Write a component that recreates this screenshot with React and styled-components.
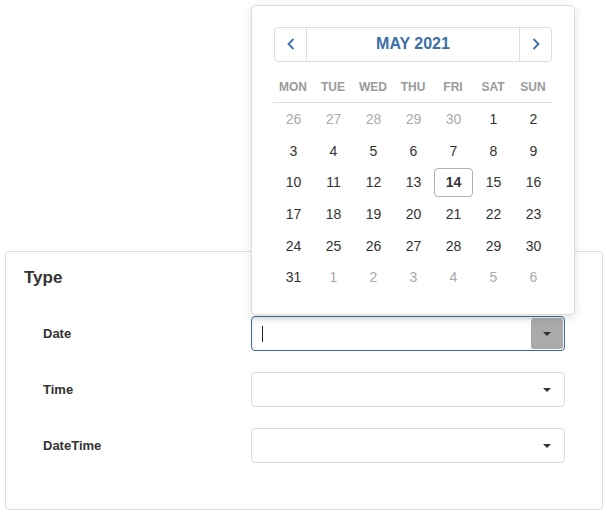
import React from 'react';
import styled, { createGlobalStyle } from 'styled-components';

const GlobalStyle = createGlobalStyle`
  body {
    margin: 0;
    background: #ffffff;
    font-family: "Liberation Sans", Arial, sans-serif;
    color: #333333;
  }
`;

const Page = styled.div`
  padding: 251px 5px 0 5px;
  width: 598px;
`;

const Panel = styled.div`
  border: 1px solid #dddddd;
  border-radius: 4px;
  padding: 16px 18px 46px 18px;
  background: #ffffff;
`;

const Heading = styled.h3`
  margin: 0 0 28px 0;
  font-size: 17px;
  line-height: 20px;
  font-weight: bold;
  color: #333333;
`;

const Form = styled.div`
  display: grid;
  grid-template-columns: 208px 314px;
  row-gap: 21px;
  padding-left: 19px;
  align-items: center;
`;

const Label = styled.label`
  font-size: 13px;
  font-weight: bold;
  color: #333333;
`;

const Field = styled.div`
  position: relative;
  height: 35px;
  box-sizing: border-box;
  border: 1px solid ${p => (p.$focused ? '#3c6c9c' : '#d9d9d9')};
  border-radius: 4px;
  background: #ffffff;
  box-shadow: ${p => (p.$focused ? 'inset 0 2px 4px rgba(0,0,0,0.09)' : 'none')};
  display: flex;
  align-items: center;
  padding: 0 1px 0 10px;
`;

const Value = styled.div`
  flex: 1;
  height: 16px;
  display: flex;
  align-items: center;
`;

const Caret = styled.span`
  width: 1px;
  height: 16px;
  background: #222222;
`;

const Toggle = styled.div`
  width: 32px;
  height: 31px;
  border-radius: 3px;
  background: ${p => (p.$active ? '#aaaaaa' : 'transparent')};
  display: flex;
  align-items: center;
  justify-content: center;
`;

const Arrow = styled.span`
  width: 0;
  height: 0;
  border-left: 4px solid transparent;
  border-right: 4px solid transparent;
  border-top: 4px solid #333333;
`;

const Popup = styled.div`
  position: absolute;
  left: -1px;
  bottom: calc(100% + 2px);
  width: 324px;
  box-sizing: border-box;
  padding: 21px 21px 21px 21px;
  background: #ffffff;
  border: 1px solid #dddddd;
  border-radius: 5px;
  box-shadow: 0 3px 10px rgba(0, 0, 0, 0.13);
  z-index: 10;
`;

const NavBar = styled.div`
  display: flex;
  height: 35px;
  box-sizing: border-box;
  margin: 0 1px;
  border: 1px solid #dddddd;
  border-radius: 4px;
`;

const NavButton = styled.div`
  width: 31px;
  display: flex;
  align-items: center;
  justify-content: center;
  border-left: ${p => (p.$side === 'next' ? '1px solid #dddddd' : 'none')};
  border-right: ${p => (p.$side === 'prev' ? '1px solid #dddddd' : 'none')};
`;

const Title = styled.div`
  flex: 1;
  display: flex;
  align-items: center;
  justify-content: center;
  font-size: 16px;
  font-weight: bold;
  color: #3b6fa6;
`;

const DayGrid = styled.div`
  display: grid;
  grid-template-columns: repeat(7, 40px);
  grid-auto-rows: 31.6px;
  margin-top: 10px;
`;

const DayName = styled.div`
  height: 30px;
  line-height: 31px;
  text-align: center;
  font-size: 12px;
  font-weight: bold;
  color: #9a9a9a;
  border-bottom: 1px solid #dddddd;
`;

const Day = styled.div`
  display: flex;
  align-items: center;
  justify-content: center;
  font-size: 14px;
  color: ${p => (p.$muted ? '#aaaaaa' : '#333333')};
  font-weight: ${p => (p.$today ? 'bold' : 'normal')};

  span {
    width: 39px;
    height: 29px;
    box-sizing: border-box;
    display: flex;
    align-items: center;
    justify-content: center;
    margin-left: 1px;
    border: 1px solid ${p => (p.$today ? '#b0b0b0' : 'transparent')};
    border-radius: 4px;
  }
`;

const Chevron = ({ dir }) => (
  <svg width="10" height="14" viewBox="0 0 10 14">
    <path
      d={dir === 'left' ? 'M7.5 2 L2.5 7 L7.5 12' : 'M2.5 2 L7.5 7 L2.5 12'}
      fill="none"
      stroke="#3b6fa6"
      strokeWidth="1.8"
    />
  </svg>
);

const dayNames = ['MON', 'TUE', 'WED', 'THU', 'FRI', 'SAT', 'SUN'];

const days = [
  ...[26, 27, 28, 29, 30].map(d => ({ d, muted: true })),
  ...Array.from({ length: 31 }, (_, i) => ({ d: i + 1, today: i + 1 === 14 })),
  ...[1, 2, 3, 4, 5, 6].map(d => ({ d, muted: true })),
];

function Calendar() {
  return (
    <Popup>
      <NavBar>
        <NavButton $side="prev"><Chevron dir="left" /></NavButton>
        <Title>MAY 2021</Title>
        <NavButton $side="next"><Chevron dir="right" /></NavButton>
      </NavBar>
      <DayGrid>
        {dayNames.map(n => <DayName key={n}>{n}</DayName>)}
        {days.map((item, i) => (
          <Day key={i} $muted={item.muted} $today={item.today}>
            <span>{item.d}</span>
          </Day>
        ))}
      </DayGrid>
    </Popup>
  );
}

export default function App() {
  return (
    <Page>
      <GlobalStyle />
      <Panel>
        <Heading>Type</Heading>
        <Form>
          <Label>Date</Label>
          <Field $focused>
            <Calendar />
            <Value><Caret /></Value>
            <Toggle $active><Arrow /></Toggle>
          </Field>
          <Label>Time</Label>
          <Field>
            <Value />
            <Toggle><Arrow /></Toggle>
          </Field>
          <Label>DateTime</Label>
          <Field>
            <Value />
            <Toggle><Arrow /></Toggle>
          </Field>
        </Form>
      </Panel>
    </Page>
  );
}
